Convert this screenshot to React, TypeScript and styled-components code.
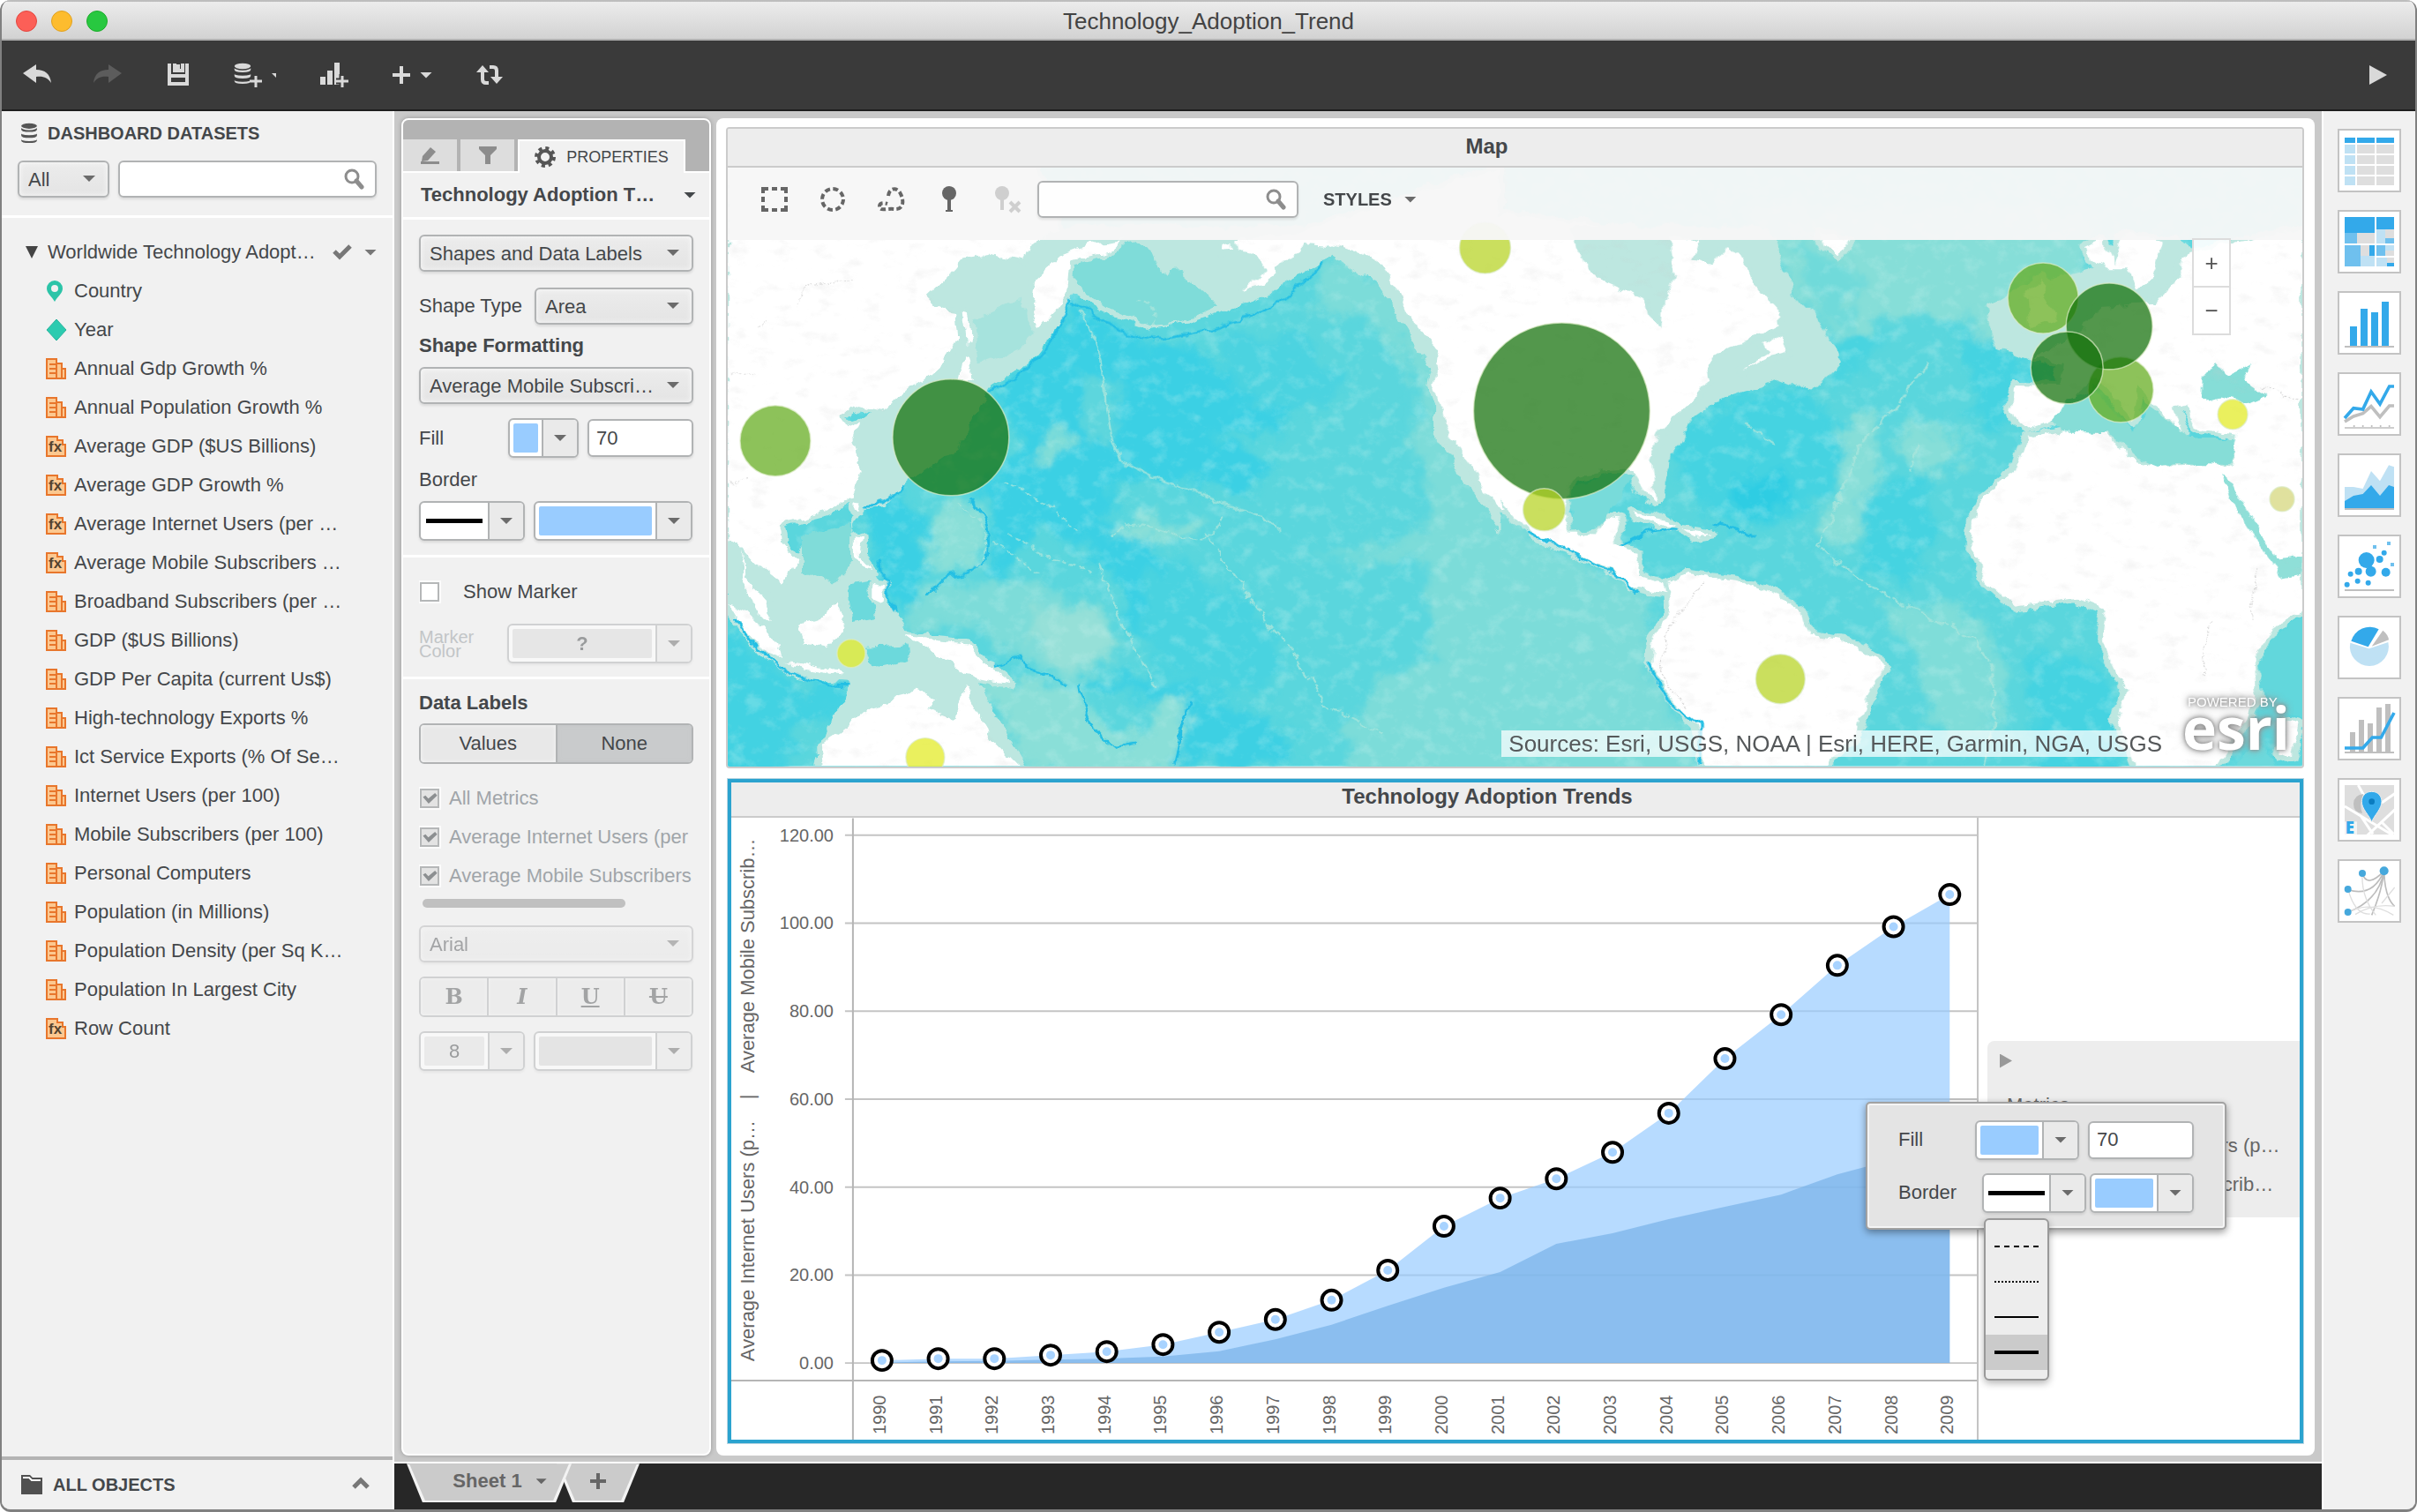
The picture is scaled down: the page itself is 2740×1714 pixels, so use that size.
import React from "react";
import styled, { createGlobalStyle, css } from "styled-components";

const GlobalStyle = createGlobalStyle`
  * { box-sizing: border-box; }
  body { margin: 0; background: #fff; }
  body, button, input, select {
    font-family: "Liberation Sans", Arial, sans-serif;
    font-size: 22px;
    color: #44474a;
  }
  button { padding: 0; border: 0; background: none; cursor: pointer; }
  h1, h2, h3, p, ul { margin: 0; padding: 0; font-size: inherit; }
  ul { list-style: none; }
  svg { display: block; flex: none; }
`;

/* ---------- window frame ---------- */

const Window = styled.div`
  height: 100vh;
  min-height: 1400px;
  display: grid;
  grid-template-rows: 46px 80px minmax(0, 1fr);
  border: 2px solid #808080;
  border-top: 0;
  border-bottom-width: 3px;
  border-radius: 12px;
  overflow: hidden;
  background: #f1f1f1;
`;

const TitleBar = styled.header`
  position: relative;
  display: flex;
  align-items: center;
  justify-content: center;
  padding-top: 2px;
  background: linear-gradient(#ececec, #d2d2d2);
  border-top: 2px solid #bdbdbd;
  border-bottom: 2px solid #b1b1b1;
  h1 { font-size: 26px; font-weight: 400; color: #434343; }
`;

const Lights = styled.div`
  position: absolute;
  left: 16px;
  top: 10px;
  display: flex;
  gap: 16px;
`;

const Light = styled.button<{ $fill: string; $edge: string }>`
  width: 24px;
  height: 24px;
  border-radius: 50%;
  background: ${(p) => p.$fill};
  border: 1px solid ${(p) => p.$edge};
`;

const Toolbar = styled.nav`
  display: flex;
  align-items: center;
  gap: 46px;
  padding: 0 30px 0 22px;
  background: #3a3a3a;
  border-bottom: 2px solid #1e1e1e;
`;

const ToolButton = styled.button<{ $dim?: boolean }>`
  display: flex;
  align-items: center;
  gap: 8px;
  color: ${(p) => (p.$dim ? "#5c5c5c" : "#d9d9d9")};
`;

const Spacer = styled.div`
  flex: 1;
`;

const Body = styled.div`
  display: grid;
  grid-template-columns: 445px minmax(0, 1fr) 106px;
  min-height: 0;
  background: #c9c9c9;
`;

const Caret = styled.span<{ $size?: number }>`
  flex: none;
  width: ${(p) => (p.$size ?? 7) * 2}px;
  height: ${(p) => p.$size ?? 7}px;
  clip-path: polygon(0 0, 100% 0, 50% 100%);
  background: currentColor;
`;

/* ---------- dataset sidebar ---------- */

const DatasetPane = styled.aside`
  display: flex;
  flex-direction: column;
  min-width: 0;
  background: #f1f1f1;
  border-right: 2px solid #fff;
`;

const PaneHeading = styled.h2`
  display: flex;
  align-items: center;
  gap: 10px;
  height: 50px;
  padding-left: 20px;
  font-size: 20px;
  font-weight: 700;
`;

const FilterRow = styled.div`
  display: flex;
  gap: 10px;
  padding: 6px 18px 20px;
  border-bottom: 3px solid #fff;
`;

const Tree = styled.ul`
  flex: 1;
  padding-top: 17px;
`;

const TreeRoot = styled.li`
  display: flex;
  align-items: center;
  height: 44px;
  padding: 0 18px 0 26px;
  gap: 10px;
  color: #44474a;
  span.name { flex: 1; white-space: nowrap; }
  > svg + ${Caret} { margin-left: 4px; color: #777; }
`;

const TreeItem = styled.li`
  display: flex;
  align-items: center;
  gap: 8px;
  height: 44px;
  padding-left: 46px;
  white-space: nowrap;
`;

const AllObjects = styled.button`
  display: flex;
  align-items: center;
  gap: 12px;
  height: 60px;
  padding: 0 26px 0 22px;
  border-top: 4px solid #b3b3b3;
  font-size: 20px;
  font-weight: 700;
`;

/* ---------- form controls ---------- */

const fieldFrame = css`
  border: 2px solid #b1b3b4;
  border-radius: 6px;
  box-shadow: 0 2px 3px rgba(0, 0, 0, 0.1);
`;

const SelectWrap = styled.div<{ $width?: string; $dim?: boolean }>`
  position: relative;
  flex: none;
  width: ${(p) => p.$width ?? "100%"};
  opacity: ${(p) => (p.$dim ? 0.45 : 1)};
  select {
    ${fieldFrame}
    appearance: none;
    display: block;
    width: 100%;
    height: 42px;
    padding: 0 30px 0 10px;
    background: linear-gradient(#ececec, #e4e4e4);
    box-shadow: inset 0 0 6px #fafafa, 0 2px 3px rgba(0, 0, 0, 0.1);
    color: #44474a;
    opacity: 1;
  }
  ${Caret} {
    position: absolute;
    right: 16px;
    top: 17px;
    color: #6b6b6b;
    pointer-events: none;
  }
`;

function Select(props: { label: string; value: string; width?: string; dim?: boolean }) {
  return (
    <SelectWrap $width={props.width} $dim={props.dim}>
      <select aria-label={props.label} defaultValue={props.value} disabled={props.dim}>
        <option>{props.value}</option>
      </select>
      <Caret />
    </SelectWrap>
  );
}

const SearchBox = styled.label<{ $width?: string }>`
  ${fieldFrame}
  display: flex;
  align-items: center;
  flex: ${(p) => (p.$width ? "none" : "1")};
  width: ${(p) => p.$width ?? "auto"};
  min-width: 0;
  height: 42px;
  padding: 0 12px;
  background: rgba(255, 255, 255, 0.94);
  input { flex: 1; width: 0; min-width: 0; border: 0; outline: 0; background: transparent; }
`;

const NumberField = styled.input`
  ${fieldFrame}
  width: 120px;
  height: 43px;
  padding: 0 8px;
  background: #fff;
`;

const Split = styled.button<{ $width: number; $dim?: boolean }>`
  ${fieldFrame}
  display: flex;
  width: ${(p) => p.$width}px;
  height: 45px;
  overflow: hidden;
  background: #fff;
  opacity: ${(p) => (p.$dim ? 0.5 : 1)};
`;

const SplitFace = styled.span<{ $fill?: string }>`
  flex: 1;
  align-self: stretch;
  display: flex;
  align-items: center;
  justify-content: center;
  margin: 4px;
  border-radius: 2px;
  background: ${(p) => p.$fill ?? "transparent"};
`;

const SplitArrow = styled.span`
  display: flex;
  align-items: center;
  justify-content: center;
  align-self: stretch;
  width: 40px;
  border-left: 2px solid #b1b3b4;
  background: #eaeaea;
  color: #6b6b6b;
`;

const Stroke = styled.span<{ $kind: "dashed" | "dotted" | "solid"; $weight: number; $width: number }>`
  width: ${(p) => p.$width}px;
  border-top: ${(p) => `${p.$weight}px ${p.$kind} #000`};
`;

function ColorPicker(props: { label: string; width: number; fill: string; text?: string; dim?: boolean }) {
  return (
    <Split type="button" aria-label={props.label} $width={props.width} $dim={props.dim} disabled={props.dim}>
      <SplitFace $fill={props.fill}>{props.text && <b>{props.text}</b>}</SplitFace>
      <SplitArrow><Caret /></SplitArrow>
    </Split>
  );
}

function StrokePicker(props: { label: string; width: number }) {
  return (
    <Split type="button" aria-label={props.label} $width={props.width}>
      <SplitFace><Stroke $kind="solid" $weight={5} $width={64} /></SplitFace>
      <SplitArrow><Caret /></SplitArrow>
    </Split>
  );
}

const Check = styled.input`
  appearance: none;
  flex: none;
  width: 22px;
  height: 22px;
  margin: 0;
  border: 2px solid #b5b7b8;
  outline: 2px solid #fbfbfb;
  background: #fff;
  &:checked { background: #e3e3e3; }
  &:checked::after {
    content: "";
    display: block;
    width: 18px;
    height: 18px;
    background: #8c8f91;
    clip-path: polygon(8% 42%, 24% 32%, 42% 52%, 84% 16%, 98% 32%, 44% 84%);
  }
`;

/* ---------- work area ---------- */

const Work = styled.div`
  display: grid;
  grid-template-rows: minmax(0, 1fr) 54px;
  min-width: 0;
`;

const Panels = styled.div`
  display: flex;
  gap: 6px;
  padding: 8px 8px 7px;
  min-height: 0;
`;

const PropertyPanel = styled.section`
  flex: none;
  width: 351px;
  border: 2px solid #fff;
  border-radius: 8px;
  overflow: hidden;
  background: #f1f1f1;
  box-shadow: 0 0 5px rgba(0, 0, 0, 0.25);
`;

const Tabs = styled.div`
  display: flex;
  gap: 4px;
  height: 60px;
  padding-top: 22px;
  background: #b3b3b3;
  border-bottom: 2px solid #fff;
`;

const Tab = styled.button<{ $active?: boolean }>`
  display: flex;
  align-items: center;
  justify-content: center;
  gap: 12px;
  width: ${(p) => (p.$active ? 190 : 61)}px;
  margin-bottom: ${(p) => (p.$active ? -2 : 0)}px;
  background: ${(p) => (p.$active ? "#f1f1f1" : "#dddddd")};
  border: ${(p) => (p.$active ? "2px solid #fff" : "0")};
  border-bottom: 0;
  font-size: 18px;
`;

const TargetRow = styled.div`
  display: flex;
  align-items: center;
  justify-content: space-between;
  height: 53px;
  padding: 0 15px 0 20px;
  border-bottom: 3px solid #fff;
  font-weight: 700;
`;

const Group = styled.div`
  display: flex;
  flex-direction: column;
  padding: 17px 18px 0;
  border-bottom: 3px solid #fff;
  &:last-child { padding-top: 4px; border-bottom: 0; }
`;

const Row = styled.div<{ $h: number; $gap?: number; $top?: number }>`
  display: flex;
  align-items: center;
  gap: ${(p) => p.$gap ?? 10}px;
  height: ${(p) => p.$h}px;
  margin-top: ${(p) => p.$top ?? 0}px;
  white-space: nowrap;
`;

const Grow = styled.span`
  flex: 1;
`;

const CheckRow = styled.label<{ $gap: number; $dim?: boolean }>`
  display: flex;
  align-items: center;
  gap: ${(p) => p.$gap}px;
  height: 44px;
  padding-left: 1px;
  overflow: hidden;
  white-space: nowrap;
  color: ${(p) => (p.$dim ? "#a0a5a9" : "#44474a")};
`;

const SmallLabel = styled.span`
  width: 90px;
  font-size: 20px;
  line-height: 16px;
  white-space: normal;
  color: #c2c5c7;
`;

const Segments = styled.div<{ $dim?: boolean }>`
  display: flex;
  height: 46px;
  border: 2px solid #b1b3b4;
  border-radius: 6px;
  overflow: hidden;
  opacity: ${(p) => (p.$dim ? 0.5 : 1)};
`;

const Segment = styled.button<{ $on?: boolean }>`
  display: flex;
  align-items: center;
  justify-content: center;
  flex: 1;
  background: ${(p) => (p.$on ? "#c9cbcc" : "#e8e8e8")};
  box-shadow: inset 0 0 5px ${(p) => (p.$on ? "#c4c6c7" : "#f7f7f7")};
  & + & { border-left: 2px solid #b1b3b4; }
`;

const FormatGlyph = styled.span<{ $style: "b" | "i" | "u" | "s" }>`
  font: 700 24px/26px "DejaVu Serif", serif;
  color: #55585a;
  font-style: ${(p) => (p.$style === "i" ? "italic" : "normal")};
  text-decoration: ${(p) => (p.$style === "u" ? "underline" : p.$style === "s" ? "line-through" : "none")};
`;

const ScrollThumb = styled.div`
  width: 230px;
  height: 10px;
  margin: 4px 0 20px 4px;
  border-radius: 5px;
  background: #c0c0c0;
`;

const Canvas = styled.main`
  flex: 1;
  min-width: 0;
  display: grid;
  grid-template-rows: minmax(0, 726fr) minmax(0, 754fr);
  gap: 11px;
  padding: 10px 12px 14px 11px;
  border-radius: 8px;
  background: #fff;
`;

const MapCard = styled.section`
  display: flex;
  flex-direction: column;
  min-height: 0;
  border: 2px solid #cbcbcb;
  border-radius: 4px;
  overflow: hidden;
`;

const CardTitle = styled.h2<{ $h: number; $lift: number }>`
  flex: none;
  display: flex;
  align-items: center;
  justify-content: center;
  height: ${(p) => p.$h}px;
  padding: 0 64px ${(p) => p.$lift}px 0;
  background: #ededed;
  border-bottom: 2px solid #cbcbcb;
  font-size: 24px;
`;

const MapArea = styled.div`
  position: relative;
  flex: 1;
  min-height: 0;
`;

const MapTools = styled.div`
  position: absolute;
  inset: 0 0 auto 0;
  height: 82px;
  padding: 0 37px 10px;
  display: flex;
  align-items: center;
  background: rgba(247, 247, 247, 0.96);
`;

const MapIcons = styled.div`
  display: flex;
  gap: 34px;
  margin-right: 18px;
`;

const StylesButton = styled.button`
  display: flex;
  align-items: center;
  gap: 14px;
  margin-left: 28px;
  font-size: 20px;
  font-weight: 700;
  ${Caret} { color: #6b6b6b; }
`;

const ZoomButtons = styled.div`
  position: absolute;
  right: 81px;
  top: 80px;
  display: flex;
  flex-direction: column;
  width: 44px;
  border: 2px solid #dcdcdc;
  background: rgba(255, 255, 255, 0.92);
  button { height: 52px; font-size: 26px; color: #555; }
  button + button { height: 54px; border-top: 2px solid #dcdcdc; }
`;

const Attribution = styled.p`
  position: absolute;
  right: 155px;
  bottom: 11px;
  padding: 0 4px 0 8px;
  line-height: 30px;
  font-size: 26px;
  color: #55585a;
  background: rgba(255, 255, 255, 0.72);
`;

const EsriMark = styled.svg`
  position: absolute;
  right: 0;
  bottom: 0;
  fill: #fff;
  filter: drop-shadow(0 0 2px #888) drop-shadow(0 0 4px #999);
`;

const ChartCard = styled.section`
  position: relative;
  display: flex;
  flex-direction: column;
  min-height: 0;
  border: 4px solid #2ba3cf;
  outline: 1px solid #b9d6e2;
  margin: 1px 1px 0 2px;
`;

const ChartBody = styled.div`
  flex: 1;
  min-height: 0;
  display: flex;
`;

const ChartArt = styled.div`
  flex: 1;
  min-width: 0;
  border-right: 2px solid #c4c4c4;
`;

const LegendColumn = styled.div`
  flex: none;
  width: 364px;
  padding: 253px 0 0 10px;
`;

const Legend = styled.div`
  height: 200px;
  padding: 15px 0 0 14px;
  border-radius: 8px 0 0 8px;
  background: #ededed;
  color: #666;
  line-height: 44px;
  white-space: nowrap;
  h3 { font-weight: 400; padding: 20px 0 2px 8px; }
  p { padding-left: 44px; }
`;

const LegendToggle = styled.button`
  display: block;
  width: 14px;
  height: 16px;
  background: #999;
  clip-path: polygon(0 0, 100% 50%, 0 100%);
`;

const Popover = styled.div`
  position: absolute;
  top: 362px;
  right: 83px;
  width: 409px;
  padding: 19px 35px 17px 35px;
  border: 2px solid #a2a2a2;
  border-radius: 5px;
  background: #e4e4e4;
  box-shadow: inset 0 0 0 2px #f5f5f5, 0 3px 8px rgba(0, 0, 0, 0.4);
`;

const StrokeMenu = styled.div`
  position: absolute;
  left: 132px;
  top: 130px;
  width: 74px;
  padding: 10px 0;
  border: 2px solid #999;
  border-radius: 6px;
  background: #ededed;
  box-shadow: 0 3px 8px rgba(0, 0, 0, 0.3);
`;

const StrokeOption = styled.button<{ $on?: boolean }>`
  display: flex;
  align-items: center;
  justify-content: center;
  width: 100%;
  height: 40px;
  background: ${(p) => (p.$on ? "#cbcbcb" : "transparent")};
`;

/* ---------- sheet bar and widget rail ---------- */

const SheetBar = styled.footer`
  display: flex;
  background: #272727;
  border-top: 2px solid #fff;
`;

const SheetTab = styled.button<{ $width: number; $left: number; $slant: number }>`
  position: relative;
  z-index: 0;
  display: flex;
  align-items: center;
  justify-content: center;
  gap: 16px;
  width: ${(p) => p.$width}px;
  height: 44px;
  margin-left: ${(p) => p.$left}px;
  padding-bottom: 4px;
  font-size: 22px;
  font-weight: 700;
  color: #666;
  &:first-child { z-index: 1; padding-left: 24px; }
  &::before, &::after {
    content: "";
    position: absolute;
    z-index: -1;
    inset: 0;
    background: #f3f3f3;
    clip-path: ${(p) => `polygon(0 0, 100% 0, calc(100% - ${p.$slant}px) 100%, ${p.$slant}px 100%)`};
  }
  &::after { inset: 0 3px 2px; background: #cbcbcb; }
`;

const Rail = styled.aside`
  display: flex;
  flex-direction: column;
  align-items: center;
  gap: 20px;
  padding: 20px 0 0;
  background: #f1f1f1;
  border-left: 2px solid #fff;
`;

const Tile = styled.button`
  width: 72px;
  height: 72px;
  border: 2px solid #c3c3c3;
  background: #fff;
  svg { width: 68px; height: 68px; }
`;

/* ---------- small icons ---------- */

const SearchIcon = () => (
  <svg width="24" height="24" viewBox="0 0 24 24" fill="none" stroke="#8d8d8d">
    <circle cx="10" cy="9" r="7" strokeWidth="3" />
    <path d="M15 14l6 7" strokeWidth="5" strokeLinecap="round" />
  </svg>
);

const DbShape = ({ fill, edge }: { fill: string; edge: string }) => (
  <g fill={fill} stroke={edge} strokeWidth="1.5">
    <path d="M0 18v3c0 5 20 5 20 0v-3c0 4-20 4-20 0z" />
    <path d="M0 11v4c0 5 20 5 20 0v-4c0 4-20 4-20 0z" />
    <path d="M0 4v4c0 5 20 5 20 0V4z" />
    <ellipse cx="10" cy="4" rx="10" ry="4" />
  </g>
);

const BarsIcon = ({ fx }: { fx?: boolean }) => (
  <svg width="28" height="28" viewBox="0 0 28 28">
    <g fill="#fcc890" stroke="#e8762c" strokeWidth="2">
      {fx ? (
        <path d="M5 3h12v4h6v5h3v13H5z" />
      ) : (
        <>
          <path d="M5 3h11v22H5z" />
          <path d="M16 8h6v17h-6z" />
          <path d="M22 14h4v11h-4z" />
          <path d="M8 9h8M8 14h8M8 19h8" />
        </>
      )}
    </g>
    {fx && (
      <text x="7" y="20" fontSize="17" fontWeight="700" fontFamily="Liberation Sans" fill="#54432f">fx</text>
    )}
  </svg>
);

const PinIcon = () => (
  <svg width="28" height="28" viewBox="0 0 28 28">
    <path d="M14 2a9 9 0 0 1 9 9c0 6-6 9-9 15-3-6-9-9-9-15a9 9 0 0 1 9-9z" fill="#2cc4a8" />
    <circle cx="14" cy="11" r="4" fill="#f1f1f1" />
  </svg>
);

const DiamondIcon = () => (
  <svg width="28" height="28" viewBox="0 0 28 28">
    <path d="M16 2l11 12-11 12L5 14z" fill="#2ccbb0" stroke="#26b39b" strokeWidth="1" />
  </svg>
);

/* ---------- map ---------- */

const SHELF = "#bde7e0";
const WEST = "translate(-25 -70) scale(.574 .4847)";
const EAST = "translate(815 -70) scale(.7015 .4847)";

const westLand = [
  "44,100 640,100 700,290 640,322 628,362 560,346 508,356 478,400 440,442 462,470 492,482 497,545 470,600 430,642 398,664 366,700 352,716 300,700 268,728 276,752 302,742 288,786 308,852 286,912 240,950 188,966 146,982 152,1022 182,1064 150,1116 100,1072 62,1022 44,1016",
  "645,488 652,405 700,352 762,324 826,314 800,340 722,362 716,440 690,482 656,522",
  "1046,314 1160,300 1568,144 1568,930 1520,832 1472,784 1438,655 1452,575 1408,520 1372,440 1338,374 1292,344 1232,322 1180,318 1170,345 1126,372 1130,392 1090,420 1060,432 1108,376 1092,350 1050,340",
  "1024,330 1036,326 1038,340 1022,342",
  "505,480 520,484 524,555 512,556",
  "508,590 518,596 528,640 500,640",
  "184,1212 226,1202 264,1152 274,1190 266,1230 242,1266 196,1256",
  "46,1164 82,1182 142,1250 150,1292 120,1280 78,1228",
  "72,1040 82,1108 122,1160 130,1206 104,1190 74,1120",
  "150,1300 200,1306 270,1326 264,1332 196,1318",
  "292,924 304,926 300,952 292,944",
  "296,1006 312,1010 308,1050 330,1086 316,1080 296,1050",
  "330,1120 350,1126 348,1160 330,1150",
  "398,1236 428,1240 446,1250 516,1258 560,1310 602,1348 560,1342 512,1330 482,1304 440,1272",
  "228,1500 326,1412 358,1402 378,1380 418,1368 452,1384 440,1412 494,1434 512,1358 542,1430 572,1490 630,1560 232,1560",
];

const eastLand = [
  "20,240 360,300 410,314 400,360 428,372 452,330 474,352 500,420 532,470 536,514 500,542 452,566 420,600 424,640 402,684 372,722 346,758 328,830 338,930 324,910 298,850 250,856 202,872 190,950 202,1000 240,1002 256,964 282,970 270,1030 308,1042 308,1096 352,1118 356,1140 300,1122 262,1078 214,1046 150,1016 124,980 60,880 30,822 10,784",
  "44,830 58,860 96,946 84,940 52,880",
  "478,620 520,580 512,560 540,534 552,580 520,590",
  "300,948 340,962 372,984 350,984 310,962",
  "382,990 430,1000 400,1008",
  "604,300 650,314 632,352 612,330",
  "1035,330 1062,310 1078,372 1094,300 1160,314 1140,400 1114,430 1100,380 1064,380 1040,360",
  "1383,290 1383,1180 1340,1222 1308,1290 1312,1392 1278,1470 1240,1560 1120,1560 1086,1440 1100,1370 1060,1252 1066,1180 1018,1152 920,1172 878,1118 850,1040 852,968 870,910 920,852 938,776 1000,760 1070,764 1104,828 1150,842 1240,838 1270,846 1280,772 1212,754 1196,700 1176,708 1190,770 1150,700 1120,650 1110,740 1070,660 1044,640 980,740 936,756 914,720 920,652 990,654 996,600 950,590 1010,540 1060,470 1148,464 1184,400 1200,340",
  "940,440 960,400 976,470 990,500 944,520",
  "360,1112 392,1096 470,1110 522,1134 572,1182 584,1240 644,1252 700,1288 706,1322 680,1390 660,1482 600,1560 418,1560 408,1460 360,1372 330,1302 336,1240 364,1180",
  "1362,1440 1380,1446 1364,1530 1346,1520",
];

const bubbles: Array<[number, number, number, string]> = [
  [54, 310, 40, "#63ab1d"],
  [253, 306, 66, "#137009"],
  [140, 551, 16, "#e2ea22"],
  [224, 669, 22, "#e2ea22"],
  [859, 91, 29, "#b7d322"],
  [946, 276, 100, "#137009"],
  [926, 388, 24, "#b7d322"],
  [1194, 580, 28, "#b7d322"],
  [1492, 148, 40, "#63ab1d"],
  [1580, 252, 37, "#63ab1d"],
  [1567, 180, 49, "#137009"],
  [1519, 227, 41, "#137009"],
  [1707, 280, 17, "#e2ea22"],
  [1763, 376, 14, "#d4d67a"],
];

const Poly = ({ pts, fill }: { pts: string; fill: string }) => <polygon points={pts} fill={fill} />;

function WorldMap() {
  return (
    <svg width="100%" height="100%" viewBox="0 0 1786 679" preserveAspectRatio="xMidYMid slice" role="img" aria-label="World map">
      <defs>
        <filter id="coast" filterUnits="userSpaceOnUse" x="0" y="0" width="1786" height="679">
          <feTurbulence type="fractalNoise" baseFrequency="0.05" numOctaves="4" seed="4" />
          <feDisplacementMap in="SourceGraphic" scale="14" xChannelSelector="R" yChannelSelector="G" />
        </filter>
        <filter id="depth" filterUnits="userSpaceOnUse" x="-40" y="-40" width="1866" height="759">
          <feTurbulence type="fractalNoise" baseFrequency="0.03" numOctaves="5" seed="9" result="n" />
          <feGaussianBlur in="SourceGraphic" stdDeviation="6" result="b" />
          <feDisplacementMap in="b" in2="n" scale="44" xChannelSelector="R" yChannelSelector="G" />
        </filter>
        <filter id="ridges" x="0" y="0" width="100%" height="100%">
          <feTurbulence type="fractalNoise" baseFrequency="0.05 0.06" numOctaves="5" seed="21" />
          <feColorMatrix values="0 0 0 0 .66  0 0 0 0 .91  0 0 0 0 .87  3 0 0 0 -1.5" />
        </filter>
        <filter id="relief" x="0" y="0" width="100%" height="100%">
          <feTurbulence type="fractalNoise" baseFrequency="0.04 0.07" numOctaves="6" seed="3" />
          <feColorMatrix values="0 0 0 0 .6  0 0 0 0 .6  0 0 0 0 .6  2.4 0 0 0 -1.35" />
        </filter>
        <clipPath id="landClip">
          {westLand.map((p) => <polygon key={p} points={p} transform={WEST} />)}
          {eastLand.map((p) => <polygon key={p} points={p} transform={EAST} />)}
        </clipPath>
      </defs>
      <rect width="1786" height="679" fill="#5ad6dd" />
      <g filter="url(#depth)">
        <g transform={WEST}>
          <Poly fill="#7bdcd9" pts="1240,340 1320,400 1568,560 1640,940 1640,1600 1300,1600 1250,1450 1330,1350 1450,1290 1460,1150 1440,1060 1180,1060 1380,1010 1450,960 1400,830 1400,700 1370,560 1300,500 1200,480 1210,400" />
          <Poly fill="#3bd0e4" pts="725,450 800,530 900,560 960,560 1040,640 1110,700 1160,720 1130,760 980,770 1080,800 1140,870 1040,900 960,890 850,850 800,900 790,980 860,1000 900,1060 960,1100 990,1180 960,1240 880,1270 840,1200 800,1080 740,1020 640,980 600,1090 560,1100 570,960 530,900 600,860 620,740 570,680 660,570" />
          <Poly fill="#4bd3e0" pts="1000,540 1180,540 1280,640 1180,720 1060,700" />
          <Poly fill="#5dd6dd" pts="740,620 800,640 820,800 760,800" />
          <Poly fill="#80ddd8" pts="640,820 690,740 730,780 690,850" />
          <Poly fill="#3bd0e4" pts="310,940 385,900 435,950 430,1090 395,1190 360,1150 338,1060" />
          <Poly fill="#3dd0e3" pts="750,1340 900,1330 1020,1380 1120,1430 1180,1543 920,1543 940,1400 780,1360" />
          <Poly fill="#48d3e0" pts="860,1090 960,1080 1060,1140 1110,1230 1150,1330 1080,1380 960,1350 880,1300" />
          <Poly fill="#7ddcd9" pts="430,1130 600,1110 700,1140 790,1180 830,1270 770,1330 690,1340 600,1270 500,1220 400,1230 400,1180" />
          <Poly fill="#96e0d8" pts="640,1180 740,1170 810,1240 790,1300 700,1310 640,1240" />
          <Poly fill="#8adfd8" pts="530,1350 740,1350 790,1480 850,1490 900,1370 955,1400 920,1570 640,1570 560,1400" />
          <Poly fill="#8adfd8" pts="460,940 520,930 555,1000 540,1070 470,1090 440,1060" />
          <Poly fill="#8adfd8" pts="800,1000 850,960 920,990 1010,960 960,1020 860,1020" />
          <Poly fill="#42d2e2" pts="0,1180 100,1290 180,1350 290,1365 265,1425 195,1440 130,1600 0,1640" />
        </g>
        <g transform={EAST}>
          <Poly fill="#7bdcd9" pts="-30,780 100,980 260,1090 340,1160 320,1300 430,1600 -30,1600" />
          <Poly fill="#86ded8" pts="480,240 1030,240 1040,400 960,560 860,560 840,500 700,500 640,560 560,440" />
          <Poly fill="#45d3e1" pts="430,700 560,650 620,720 650,800 600,930 520,990 420,960 370,860 380,760" />
          <Poly fill="#2fcde3" pts="460,880 540,860 560,930 480,975" />
          <Poly fill="#45d3e1" pts="690,880 780,870 790,960 770,1080 740,1130 680,1080 660,960" />
          <Poly fill="#45d3e1" pts="830,520 900,560 940,620 910,760 860,770 850,640" />
          <Poly fill="#45d3e1" pts="940,1300 1050,1290 1090,1400 1080,1600 960,1600" />
          <Poly fill="#48d4e0" pts="640,520 700,540 680,640 620,640" />
          <Poly fill="#70dada" pts="560,340 620,340 680,420 640,520 600,490" />
          <Poly fill="#86ded8" pts="640,740 700,720 700,880 640,1040 600,1020 640,880" />
          <Poly fill="#86ded8" pts="730,760 830,740 830,850 760,860" />
          <Poly fill="#7fddd9" pts="700,1160 860,1180 900,1300 880,1500 800,1500 760,1300" />
        </g>
      </g>
      <rect width="1786" height="679" filter="url(#ridges)" opacity=".25" />
      <g filter="url(#coast)">
        <g transform={WEST} fill={SHELF}>
          <polygon points="420,330 640,280 1230,280 1340,350 1420,500 1470,580 1462,680 1500,780 1568,870 1568,1000 1490,860 1440,760 1440,620 1400,560 1330,420 1240,352 1180,392 1090,455 960,508 880,522 800,492 730,440 700,510 640,602 560,662 500,800 400,880 350,940 310,946 290,990 200,1010 150,1120 100,1060 40,1010 40,1190 110,1290 180,1340 290,1350 240,1450 200,1600 660,1600 560,1400 530,1330 400,1230 360,1160 330,1090 290,1060 290,900 300,740 420,640" />
          <Poly fill="#7fdcd9" pts="722,350 850,314 880,334 900,392 940,388 990,440 1012,470 940,508 880,514 800,476 742,430 720,400" />
          <Poly fill="#a6e3dd" pts="530,500 620,450 660,520 620,570 540,600" />
          <Poly fill="#80dcd9" pts="190,1010 286,975 296,1060 250,1120 190,1090" />
          <Poly fill="#6cd9dc" pts="280,1120 330,1110 340,1200 290,1210" />
          <Poly fill="#6cd9dc" pts="310,1265 400,1260 405,1300 330,1320" />
        </g>
        <g transform={EAST} fill={SHELF}>
          <polygon points="360,280 520,280 560,440 600,500 640,600 590,670 540,640 450,680 400,730 370,800 350,930 310,890 300,700" />
          <polygon points="870,470 930,420 1040,380 1180,300 1210,340 1160,460 1060,520 960,600 890,570" />
        </g>
        <g fill={SHELF} stroke={SHELF} strokeWidth="20" strokeLinejoin="round">
          {westLand.map((p) => <polygon key={p} points={p} transform={WEST} />)}
          {eastLand.map((p) => <polygon key={p} points={p} transform={EAST} />)}
        </g>
        <g fill="#fff">
          {westLand.map((p) => <polygon key={p} points={p} transform={WEST} />)}
          {eastLand.map((p) => <polygon key={p} points={p} transform={EAST} />)}
        </g>
        <g transform={EAST}>
          <Poly fill={SHELF} pts="200,280 362,280 370,400 350,460 348,520 326,490 320,450 244,402 218,370" />
          <Poly fill="#86ddd7" pts="982,740 1000,690 1050,670 1110,760 1140,700 1200,780 1280,780 1268,840 1180,836 1150,844 1110,820 1074,764 1000,760" />
          <Poly fill="#86ddd7" pts="1222,690 1224,640 1244,600 1264,632 1306,596 1290,640 1326,680 1300,696 1250,680" />
          <Poly fill="#8fdfd8" pts="1254,862 1272,880 1312,990 1342,1060 1383,1052 1383,1096 1350,1104 1310,1020 1272,930" />
          <Poly fill="#62d7dc" pts="1400,1180 1340,1240 1312,1310 1330,1400 1400,1440" />
          <Poly fill="#78dbda" pts="200,900 260,860 300,862 280,920 240,990 206,996" />
          <Poly fill="#6cd9dc" pts="1270,1560 1310,1480 1350,1560" />
        </g>
        <g fill="none" stroke="#22bfe4" strokeWidth="5" strokeLinecap="round">
          <path transform={WEST} d="M727 455C780 510 840 545 900 545C1020 530 1140 480 1222 366" />
          <path transform={WEST} d="M722 450C700 540 650 620 560 672M390 890C360 930 330 940 312 940M345 1060Q350 1130 376 1185" />
          <path transform={WEST} d="M525 920Q570 980 555 1060Q530 1090 480 1100L440 1150M60 1200C110 1310 200 1360 290 1356M740 1355Q760 1480 810 1500L850 1492M955 1400Q930 1480 925 1540" />
          <path transform={WEST} d="M570 1310L620 1290L640 1312L720 1356" />
          <path transform={EAST} d="M130 1000Q220 1050 262 1085L310 1135M326 1300Q350 1390 410 1450V1540M280 1030Q330 985 372 990M430 980Q480 985 495 1010" />
        </g>
        <g fill="none" stroke="#a9e5dc" strokeWidth="4" strokeLinecap="round" opacity=".85">
          <path transform={WEST} d="M735 480Q790 560 790 700L800 780L820 830M820 830Q900 880 960 905L1100 960L1134 995" />
          <path transform={WEST} d="M800 1010Q840 950 920 1000T1020 960M780 1080L830 1230L890 1360M990 1000Q1050 1120 1120 1220T1220 1400L1340 1470" strokeDasharray="14 8" />
          <path transform={WEST} d="M500 930Q540 960 552 1010T530 1080M590 880L680 940L740 1000M600 1000L680 1060L760 1090M570 1020L660 1090M850 455Q890 450 884 515" strokeDasharray="8 10" />
          <path transform={EAST} d="M780 600Q720 720 690 760T640 900T600 1020L640 1080Q720 1160 820 1220T870 1540M480 740L530 790M760 800L752 860" strokeDasharray="20 8" />
        </g>
      </g>
      <g clipPath="url(#landClip)" opacity=".22">
        <rect width="1786" height="679" filter="url(#relief)" />
      </g>
      <g filter="url(#coast)" fill="none" stroke="#999" strokeWidth="1.5" strokeDasharray="3 4" opacity=".7">
        <path transform={EAST} d="M415 1120Q380 1170 370 1210T345 1290Q350 1360 390 1400M1312 1080L1300 1200M1235 1210Q1220 1280 1225 1340M1320 660L1380 690" />
        <path transform={WEST} d="M180 470L200 425L290 400M105 515L125 508M50 630L100 620M48 880L80 872" />
      </g>
      <g stroke="#dcebc4" strokeOpacity=".7" strokeWidth="1.5" fillOpacity=".73">
        {bubbles.map(([x, y, r, fill]) => <circle key={`${x}-${y}`} cx={x} cy={y} r={r} fill={fill} />)}
      </g>
    </svg>
  );
}

/* ---------- chart ---------- */

const mobile = [0.6, 1, 1, 1.8, 2.6, 4.2, 7, 9.9, 14.3, 21.1, 31.1, 37.5, 41.9, 47.9, 56.8, 69.2, 79.2, 90.4, 99.2, 106.5];
const internet = [0.1, 0.4, 0.5, 0.8, 1, 1.5, 2.7, 5.4, 8.7, 13, 17.1, 20.7, 27.1, 29.5, 32.7, 35.5, 38.3, 42.9, 46.3, 49];
const xAt = (i: number) => 171 + i * 63.75;
const yAt = (v: number) => 618 - v * 4.99;
const area = (vals: number[]) =>
  `M${xAt(0)} ${yAt(0)}` + vals.map((v, i) => `L${xAt(i)} ${yAt(v)}`).join("") + `L${xAt(vals.length - 1)} ${yAt(0)}Z`;

function TrendChart() {
  return (
    <svg width="100%" height="100%" viewBox="0 0 1413 705" fontFamily="Liberation Sans, Arial, sans-serif" fontSize="20" fill="#666" role="img" aria-label="Technology adoption by year">
      {[0, 20, 40, 60, 80, 100, 120].map((v) => (
        <g key={v}>
          <path d={`M129 ${yAt(v)}H1413`} stroke="#c4c4c4" strokeWidth="2" />
          <text x="116" y={yAt(v) + 7} textAnchor="end">{v.toFixed(2)}</text>
        </g>
      ))}
      <path d="M138 0V705" stroke="#b5b5b5" strokeWidth="2" />
      <path d="M0 638H1413" stroke="#b5b5b5" strokeWidth="2" />
      <path d={area(mobile)} fill="#99ccff" fillOpacity=".7" />
      <path d={area(internet)} fill="#78b2e8" fillOpacity=".7" />
      {mobile.map((v, i) => (
        <g key={i}>
          <circle cx={xAt(i)} cy={yAt(v)} r="11" fill="#fff" stroke="#000" strokeWidth="4" />
          <circle cx={xAt(i)} cy={yAt(v)} r="5" fill="#a8d3ff" />
          <text transform={`translate(${xAt(i) + 4} 699) rotate(-90)`}>{1990 + i}</text>
        </g>
      ))}
      <g fontSize="22">
        <text transform="translate(26 616) rotate(-90)">Average Internet Users (p…</text>
        <text transform="translate(26 319) rotate(-90)">|</text>
        <text transform="translate(26 289) rotate(-90)">Average Mobile Subscrib…</text>
      </g>
    </svg>
  );
}

/* ---------- widget glyphs, drawn on a 216-unit tile ---------- */

const B = "#33a9ea";
const M = "#6fc0ee";
const L = "#bfe1f4";
const G = "#dedede";
const D = "#bfbfbf";

const rects = (list: Array<[number, number, number, number, string]>) =>
  list.map(([x, y, w, h, f]) => <rect key={`${x}.${y}`} x={x} y={y} width={w} height={h} fill={f} />);
const baseLine = <rect x="24" y="186" width="168" height="6" fill={D} />;

const widgets: Array<[string, React.ReactNode]> = [
  ["Grid", rects([
    [24, 30, 36, 18, B], [66, 30, 60, 18, B], [132, 30, 60, 18, B],
    ...[54, 90, 126, 162].flatMap((y) => [
      [24, y, 36, 30, L], [66, y, 60, 30, G], [132, y, 60, 30, G],
    ] as Array<[number, number, number, number, string]>),
  ])],
  ["Heat map", rects([
    [24, 24, 102, 54, B], [132, 24, 60, 42, B], [24, 78, 42, 36, M], [66, 78, 60, 36, G],
    [132, 66, 30, 48, L], [162, 66, 30, 30, G], [162, 96, 30, 18, M], [24, 120, 54, 72, M],
    [78, 120, 30, 36, G], [108, 120, 18, 36, B], [78, 156, 48, 36, L], [132, 120, 30, 36, M],
    [162, 120, 30, 18, L], [162, 138, 30, 18, G], [132, 162, 36, 30, L], [168, 162, 24, 18, G], [168, 180, 24, 12, B],
  ])],
  ["Bar chart", <>{rects([[42, 120, 24, 66, B], [78, 60, 24, 126, B], [114, 72, 24, 114, B], [150, 36, 24, 150, B]])}{baseLine}</>],
  ["Line chart", <g fill="none" strokeWidth="11">
    <path d="M24 168L54 150L86 140L114 116L144 152L176 114H192" stroke={D} />
    <path d="M24 156L54 122L86 126L114 66L144 108L176 48H192" stroke={B} />
    <path d="M24 189H192M56 180v6M86 180v6M116 180v6M146 180v6M176 180v6" stroke={D} strokeWidth="5" />
  </g>],
  ["Area chart", <>
    <path d="M24 114H54L86 120L114 60L144 94L174 40L192 46V186H24z" fill={L} />
    <path d="M24 162L54 144L86 138L114 108L144 144L174 108L192 114V186H24z" fill={B} />
    {baseLine}
  </>],
  ["Bubble chart", <>
    <g fill={B}>
      {[[98, 87, 27], [113, 125, 18], [164, 128, 15], [143, 84, 12], [158, 62, 9], [71, 125, 12], [44, 134, 9], [32, 170, 9], [68, 158, 9], [104, 164, 9]].map(
        ([x, y, r]) => <circle key={x} cx={x} cy={y} r={r} />,
      )}
    </g>
    {rects([[120, 36, 12, 12, M], [168, 24, 12, 12, M], [180, 96, 12, 12, M]])}
    {baseLine}
  </>],
  ["Pie chart", <>
    <path d="M43 92L107 112L172 90A66 66 0 1 1 43 92z" fill={L} />
    <path d="M46 86A66 66 0 0 1 140 46L104 106z" fill={B} />
    <path d="M116 104L154 50Q172 64 174 82z" fill={D} />
  </>],
  ["Combination chart", <>
    {rects([[42, 120, 18, 66, D], [72, 78, 18, 108, D], [102, 90, 18, 96, D], [132, 36, 18, 150, D], [162, 24, 18, 162, D]])}
    {baseLine}
    <path d="M24 174H86L118 138H148L192 54" fill="none" stroke={B} strokeWidth="11" />
  </>],
  ["Esri map", <>
    <rect x="24" y="24" width="168" height="168" fill={G} />
    <path d="M24 96L190 196M70 24L90 60M196 52L150 84M100 196L196 106M80 130L120 190M150 150L190 190" stroke="#fff" strokeWidth="9" />
    <path d="M88 54Q54 58 54 88T84 120Q72 90 88 54z" fill={D} />
    <path d="M116 46c24 0 34 18 34 34 0 26-26 46-34 70-8-24-34-44-34-70 0-16 10-34 34-34z" fill={B} stroke="#eee" strokeWidth="3" />
    <circle cx="116" cy="80" r="10" fill="#0a7cc0" />
    <rect x="24" y="148" width="42" height="44" fill="#f4f4f4" />
    <text x="26" y="190" fontFamily="Open Sans" fontWeight="800" fontSize="56" fill={B}>E</text>
  </>],
  ["Network", <>
    <g fill="none" stroke="#bdbdbd" strokeWidth="5">
      <path d="M84 48Q100 100 158 40M36 104Q120 130 158 40M36 180Q140 140 158 40M158 40Q150 110 116 190M158 40Q160 130 194 160" />
      <path d="M36 180Q110 140 190 190M84 48Q80 130 130 190M36 104Q60 190 110 186M60 188Q120 150 194 160M194 96L150 150" stroke="#dedede" strokeWidth="4" />
    </g>
    <g fill="#46a8dc">
      <circle cx="35" cy="102" r="12" /><circle cx="35" cy="180" r="12" /><circle cx="84" cy="48" r="12" /><circle cx="158" cy="40" r="15" />
    </g>
  </>],
];

/* ---------- content ---------- */

const fields: Array<[string, "pin" | "diamond" | "bars" | "fx"]> = [
  ["Country", "pin"],
  ["Year", "diamond"],
  ["Annual Gdp Growth %", "bars"],
  ["Annual Population Growth %", "bars"],
  ["Average GDP ($US Billions)", "fx"],
  ["Average GDP Growth %", "fx"],
  ["Average Internet Users (per …", "fx"],
  ["Average Mobile Subscribers …", "fx"],
  ["Broadband Subscribers (per …", "bars"],
  ["GDP ($US Billions)", "bars"],
  ["GDP Per Capita (current Us$)", "bars"],
  ["High-technology Exports %", "bars"],
  ["Ict Service Exports (% Of Se…", "bars"],
  ["Internet Users (per 100)", "bars"],
  ["Mobile Subscribers (per 100)", "bars"],
  ["Personal Computers", "bars"],
  ["Population (in Millions)", "bars"],
  ["Population Density (per Sq K…", "bars"],
  ["Population In Largest City", "bars"],
  ["Row Count", "fx"],
];

function Datasets() {
  return (
    <DatasetPane>
      <PaneHeading>
        <svg width="22" height="26" viewBox="-1 -1 22 27"><DbShape fill="#555" edge="#f1f1f1" /></svg>
        DASHBOARD DATASETS
      </PaneHeading>
      <FilterRow>
        <Select label="Dataset type" value="All" width="104px" />
        <SearchBox><input type="search" aria-label="Search datasets" /><SearchIcon /></SearchBox>
      </FilterRow>
      <Tree>
        <TreeRoot>
          <svg width="16" height="14" viewBox="0 0 16 14"><path d="M1 0h14L8 14z" fill="#444" /></svg>
          <span className="name">Worldwide Technology Adopt…</span>
          <svg width="22" height="18" viewBox="0 0 22 18"><path d="M2 8l6 6L20 2" fill="none" stroke="#777" strokeWidth="5" /></svg>
          <Caret />
        </TreeRoot>
        {fields.map(([name, kind]) => (
          <TreeItem key={name}>
            {kind === "pin" ? <PinIcon /> : kind === "diamond" ? <DiamondIcon /> : <BarsIcon fx={kind === "fx"} />}
            {name}
          </TreeItem>
        ))}
      </Tree>
      <AllObjects type="button">
        <svg width="24" height="22" viewBox="0 0 24 22">
          <path d="M0 0h10l3 3h11v19H0z" fill="#505050" />
          <path d="M2 3h7l3 3h10" stroke="#fff" strokeWidth="2" fill="none" />
        </svg>
        ALL OBJECTS
        <Spacer />
        <svg width="20" height="18" viewBox="0 0 20 18"><path d="M2 12l8-8 8 8" fill="none" stroke="#777" strokeWidth="5" /></svg>
      </AllObjects>
    </DatasetPane>
  );
}

function Properties() {
  return (
    <PropertyPanel>
      <Tabs role="tablist">
        <Tab type="button" role="tab" aria-label="Edit">
          <svg width="24" height="22" viewBox="0 0 24 22" fill="#8c8c8c">
            <path d="M3 12l9-10 6 5-9 10-7 1z" /><path d="M1 18h21v3H1z" />
          </svg>
        </Tab>
        <Tab type="button" role="tab" aria-label="Filter">
          <svg width="20" height="20" viewBox="0 0 20 20"><path d="M0 0h20v3l-7 7v10H7V10L0 3z" fill="#8c8c8c" /></svg>
        </Tab>
        <Tab type="button" role="tab" aria-selected $active>
          <svg width="24" height="24" viewBox="0 0 24 24" fill="none" stroke="#555">
            <circle cx="12" cy="12" r="7" strokeWidth="4" />
            <circle cx="12" cy="12" r="10" strokeWidth="4" strokeDasharray="4 3.85" />
          </svg>
          PROPERTIES
        </Tab>
      </Tabs>
      <TargetRow>Technology Adoption T…<Caret /></TargetRow>
      <Group>
        <Select label="Formatting target" value="Shapes and Data Labels" />
        <Row $h={42} $top={18}><Grow>Shape Type</Grow><Select label="Shape type" value="Area" width="180px" /></Row>
        <Row $h={48} as="h3">Shape Formatting</Row>
        <Select label="Metric" value="Average Mobile Subscri…" />
        <Row $h={45} $top={16}>
          <Grow>Fill</Grow>
          <ColorPicker label="Fill color" width={80} fill="#99ccff" />
          <NumberField aria-label="Fill opacity" defaultValue="70" />
        </Row>
        <Row $h={49}>Border</Row>
        <Row $h={45}>
          <StrokePicker label="Border style" width={120} />
          <ColorPicker label="Border color" width={180} fill="#99ccff" />
        </Row>
        <Row $h={16} />
      </Group>
      <Group>
        <CheckRow $gap={27}><Check type="checkbox" />Show Marker</CheckRow>
        <Row $h={45} $top={14}>
          <SmallLabel>Marker Color</SmallLabel>
          <ColorPicker label="Marker color" width={210} fill="#dcdcdc" text="?" dim />
        </Row>
        <Row $h={15} />
      </Group>
      <Group>
        <Row $h={46} as="h3">Data Labels</Row>
        <Segments>
          <Segment type="button">Values</Segment>
          <Segment type="button" $on>None</Segment>
        </Segments>
        <Row $h={17} />
        {["All Metrics", "Average Internet Users (per", "Average Mobile Subscribers"].map((t) => (
          <CheckRow key={t} $gap={11} $dim><Check type="checkbox" defaultChecked disabled />{t}</CheckRow>
        ))}
        <ScrollThumb />
        <Select label="Font" value="Arial" dim />
        <Row $h={16} />
        <Segments $dim>
          {(["b", "i", "u", "s"] as const).map((s) => (
            <Segment key={s} type="button" aria-label={`Style ${s}`}>
              <FormatGlyph $style={s}>{s === "b" ? "B" : s === "i" ? "I" : "U"}</FormatGlyph>
            </Segment>
          ))}
        </Segments>
        <Row $h={45} $top={16}>
          <Split type="button" $width={120} $dim aria-label="Font size">
            <SplitFace $fill="#e4e4e4">8</SplitFace>
            <SplitArrow><Caret /></SplitArrow>
          </Split>
          <ColorPicker label="Font color" width={180} fill="#d8d8d8" dim />
        </Row>
      </Group>
    </PropertyPanel>
  );
}

const Pushpin = ({ off }: { off?: boolean }) => (
  <svg width="32" height="32" viewBox="0 0 32 32" fill={off ? "#cfcfcf" : "#666"}>
    <circle cx={off ? 10 : 16} cy="9" r="8" />
    <path d={off ? "M8 16h4v12H8z" : "M14 16h4v14h-4zM12 28h8v2h-8z"} />
    {off && <path d="M19 19l11 11M30 19L19 30" stroke="#cfcfcf" strokeWidth="4" />}
  </svg>
);

function MapView() {
  return (
    <MapCard>
      <CardTitle $h={44} $lift={2}>Map</CardTitle>
      <MapArea>
        <WorldMap />
        <MapTools>
          <MapIcons>
            <button type="button" aria-label="Rectangle select">
              <svg width="32" height="32" viewBox="0 0 32 32" fill="none" stroke="#666" strokeWidth="4">
                <path d="M3 9V4h6M13 4h6M23 4h6v5M29 13v6M29 23v5h-6M19 28h-6M9 28H3v-5M3 19v-6" />
              </svg>
            </button>
            <button type="button" aria-label="Circle select">
              <svg width="32" height="32" viewBox="0 0 32 32" fill="none" stroke="#666" strokeWidth="4">
                <circle cx="16" cy="16" r="12" strokeDasharray="6 3.42" />
              </svg>
            </button>
            <button type="button" aria-label="Lasso select">
              <svg width="32" height="32" viewBox="0 0 32 32" fill="none" stroke="#666" strokeWidth="4" strokeDasharray="6 3">
                <path d="M13 12C14 3 22 2 26 8C32 18 30 28 20 27C10 26 3 30 3 24C3 19 9 20 12 21" />
              </svg>
            </button>
            <button type="button" aria-label="Add pin"><Pushpin /></button>
            <button type="button" aria-label="Remove pin" disabled><Pushpin off /></button>
          </MapIcons>
          <SearchBox $width="296px"><input type="search" aria-label="Search map" /><SearchIcon /></SearchBox>
          <StylesButton type="button">STYLES<Caret /></StylesButton>
        </MapTools>
        <ZoomButtons>
          <button type="button" aria-label="Zoom in">+</button>
          <button type="button" aria-label="Zoom out">−</button>
        </ZoomButtons>
        <Attribution>Sources: Esri, USGS, NOAA | Esri, HERE, Garmin, NGA, USGS</Attribution>
        <EsriMark width="150" height="100" viewBox="0 0 150 100" role="img" aria-label="Powered by Esri">
          <text x="20" y="32" fontSize="15" fontFamily="Liberation Sans, sans-serif">POWERED BY</text>
          <text x="14" y="81" fontSize="66" fontWeight="700" fontFamily="Open Sans, sans-serif">esri</text>
        </EsriMark>
      </MapArea>
    </MapCard>
  );
}

function ChartView() {
  return (
    <ChartCard>
      <CardTitle $h={40} $lift={6}>Technology Adoption Trends</CardTitle>
      <ChartBody>
        <ChartArt><TrendChart /></ChartArt>
        <LegendColumn>
          <Legend>
            <LegendToggle type="button" aria-label="Collapse legend" />
            <h3>Metrics</h3>
            <p>Average Internet Users (p…</p>
            <p>Average Mobile Subscrib…</p>
          </Legend>
        </LegendColumn>
      </ChartBody>
      <Popover>
        <Row $h={45}>
          <Grow>Fill</Grow>
          <ColorPicker label="Series fill color" width={118} fill="#99ccff" />
          <NumberField aria-label="Series fill opacity" defaultValue="70" />
        </Row>
        <Row $h={45} $top={15} $gap={4}>
          <Grow>Border</Grow>
          <StrokePicker label="Series border style" width={118} />
          <ColorPicker label="Series border color" width={118} fill="#99ccff" />
        </Row>
        <StrokeMenu role="menu">
          <StrokeOption type="button" aria-label="Dashed"><Stroke $kind="dashed" $weight={2} $width={50} /></StrokeOption>
          <StrokeOption type="button" aria-label="Dotted"><Stroke $kind="dotted" $weight={2} $width={50} /></StrokeOption>
          <StrokeOption type="button" aria-label="Thin"><Stroke $kind="solid" $weight={2} $width={50} /></StrokeOption>
          <StrokeOption type="button" aria-label="Thick" $on><Stroke $kind="solid" $weight={4} $width={50} /></StrokeOption>
        </StrokeMenu>
      </Popover>
    </ChartCard>
  );
}

export default function App() {
  return (
    <>
      <GlobalStyle />
      <Window>
        <TitleBar>
          <Lights>
            <Light aria-label="Close" $fill="#fc5f57" $edge="#e2463f" />
            <Light aria-label="Minimize" $fill="#fdbc2e" $edge="#e0a01f" />
            <Light aria-label="Maximize" $fill="#28c840" $edge="#1dac2b" />
          </Lights>
          <h1>Technology_Adoption_Trend</h1>
        </TitleBar>
        <Toolbar>
          <ToolButton aria-label="Undo">
            <svg width="36" height="24" viewBox="0 0 36 24" fill="currentColor"><path d="M2 10L17 0v6c10 0 16 5 17 15-4-6-9-8-17-7v7z" /></svg>
          </ToolButton>
          <ToolButton aria-label="Redo" $dim>
            <svg width="36" height="24" viewBox="2 0 36 24" fill="currentColor"><path d="M34 10L19 0v6C9 6 3 11 2 21c4-6 9-8 17-7v7z" /></svg>
          </ToolButton>
          <ToolButton aria-label="Save">
            <svg width="28" height="28" viewBox="0 0 28 28" fill="none" stroke="currentColor" strokeWidth="4">
              <path d="M4 1v23h20V1M4 15h20M10 1v8h9V1M14 2v5" />
            </svg>
          </ToolButton>
          <ToolButton aria-label="Add dataset">
            <svg width="36" height="30" viewBox="0 0 36 30">
              <g transform="translate(3 1)"><DbShape fill="#d9d9d9" edge="#3a3a3a" /></g>
              <path d="M28 15v14M21 22h14" stroke="#3a3a3a" strokeWidth="7" />
              <path d="M28 16v13M21 22h14" stroke="#d9d9d9" strokeWidth="3" />
            </svg>
            <svg width="10" height="8" viewBox="0 0 10 8"><path d="M2 2h5v5z" fill="#d9d9d9" /></svg>
          </ToolButton>
          <ToolButton aria-label="Add visualization">
            <svg width="34" height="30" viewBox="0 0 34 30" fill="currentColor">
              <path d="M1 17h6v9H1zM9 10h6v16H9zM17 1h6v25h-6z" />
              <path d="M26 14v15M19 22h14" stroke="#3a3a3a" strokeWidth="7" />
              <path d="M26 16v13M19 22h14" stroke="currentColor" strokeWidth="3" />
            </svg>
          </ToolButton>
          <ToolButton aria-label="Insert">
            <svg width="26" height="24" viewBox="0 0 26 24"><path d="M13 2v20M3 12h20" stroke="currentColor" strokeWidth="4" /></svg>
            <Caret />
          </ToolButton>
          <ToolButton aria-label="Refresh">
            <svg width="36" height="26" viewBox="-3 0 36 26" fill="none" stroke="currentColor" strokeWidth="4">
              <path d="M8 8v10q0 4 4 4h3M24 17V8q0-4-4-4h-4" />
              <path d="M1 10l7-8 7 8zM17 15l7 8 7-8z" fill="currentColor" stroke="none" />
            </svg>
          </ToolButton>
          <Spacer />
          <ToolButton aria-label="Run">
            <svg width="24" height="24" viewBox="0 0 24 24" fill="currentColor"><path d="M2 1l20 11L2 23z" /></svg>
          </ToolButton>
        </Toolbar>
        <Body>
          <Datasets />
          <Work>
            <Panels>
              <Properties />
              <Canvas>
                <MapView />
                <ChartView />
              </Canvas>
            </Panels>
            <SheetBar>
              <SheetTab type="button" $width={187} $left={14} $slant={18}>Sheet 1<Caret $size={6} /></SheetTab>
              <SheetTab type="button" aria-label="Add sheet" $width={94} $left={-17} $slant={18}>
                <svg width="18" height="18" viewBox="0 0 18 18"><path d="M9 0v18M0 9h18" stroke="#666" strokeWidth="4" /></svg>
              </SheetTab>
            </SheetBar>
          </Work>
          <Rail>
            {widgets.map(([name, art]) => (
              <Tile key={name} type="button" aria-label={name}>
                <svg viewBox="6 6 204 204">{art}</svg>
              </Tile>
            ))}
          </Rail>
        </Body>
      </Window>
    </>
  );
}
